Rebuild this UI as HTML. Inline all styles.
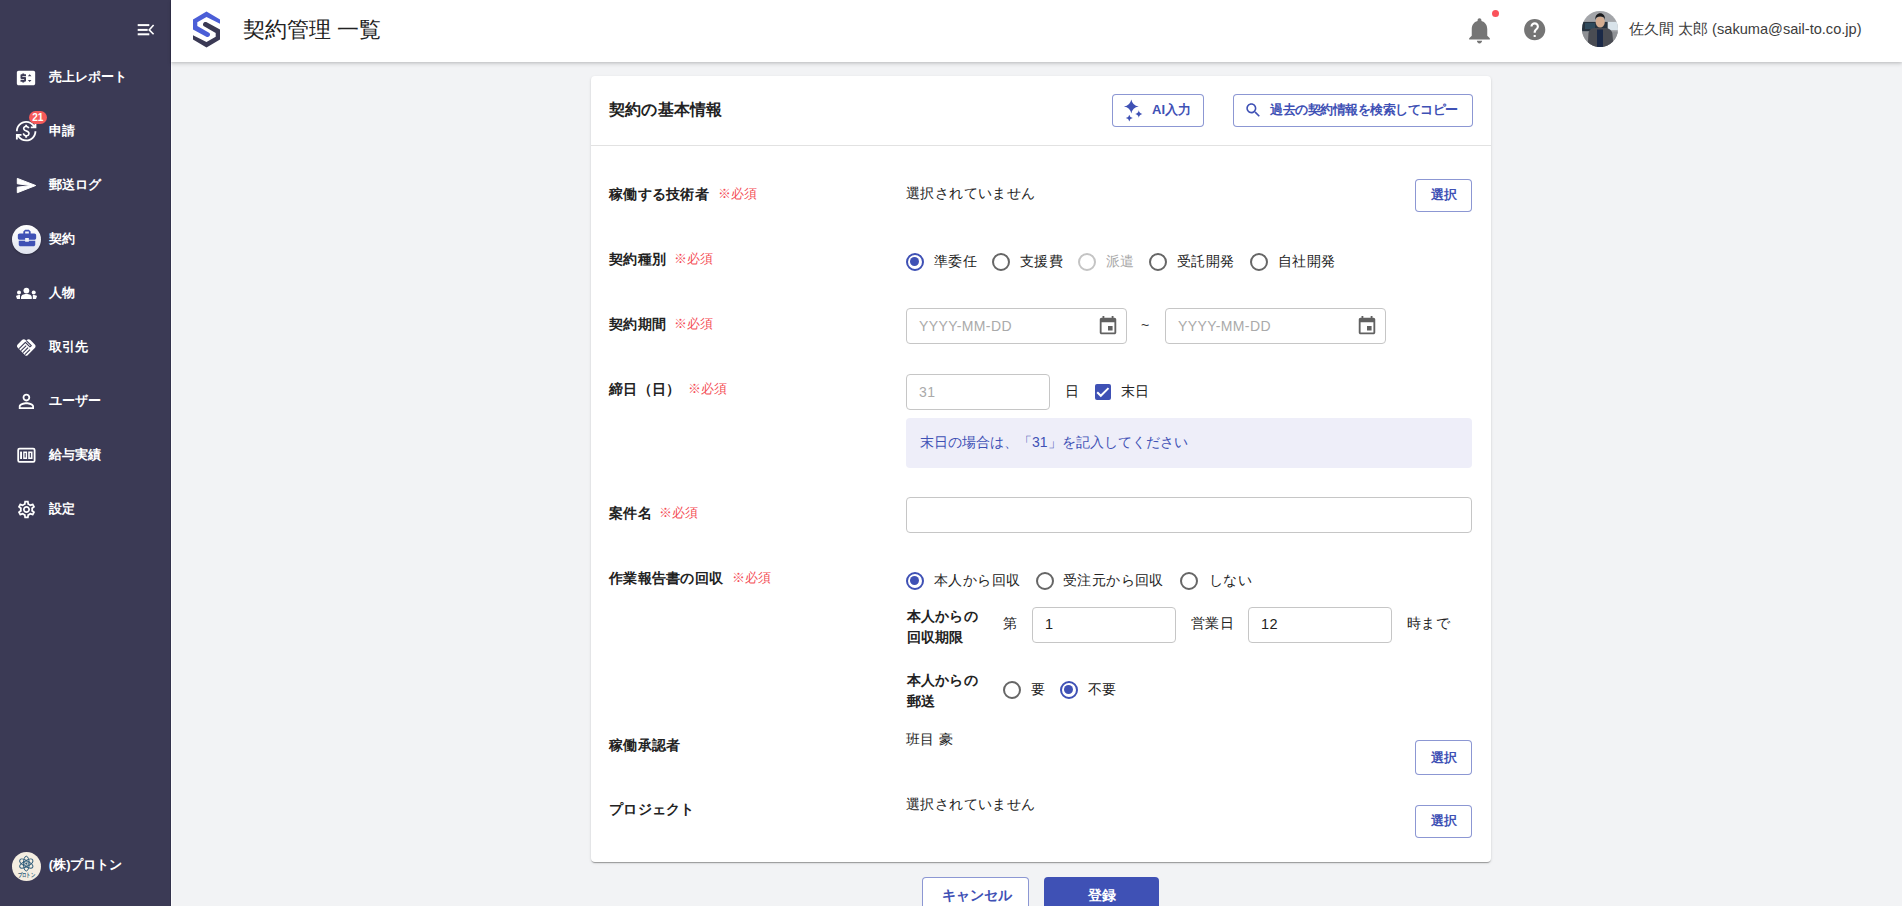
<!DOCTYPE html>
<html lang="ja">
<head>
<meta charset="utf-8">
<style>
*{box-sizing:border-box;margin:0;padding:0}
html,body{width:1902px;height:906px;overflow:hidden}
body{background:#f2f3f5;font-family:"Liberation Sans",sans-serif;color:#222;position:relative}
.a{position:absolute}
.t{position:absolute;white-space:nowrap;line-height:1}
#side{position:absolute;left:0;top:0;width:171px;height:906px;background:#3b3a55;border-right:1px solid #33324c}
#sline{position:absolute;left:171px;top:62px;width:1px;height:844px;background:#fbfbfc}
#head{position:absolute;left:171px;top:0;width:1731px;height:62px;background:#fff;box-shadow:0 2px 4px rgba(0,0,0,0.14),0 1px 2px rgba(0,0,0,0.08)}
.nav{position:absolute;left:48.8px;color:#fff;font-weight:bold;font-size:13px;line-height:1;white-space:nowrap}
.card{position:absolute;left:591px;top:76px;width:900px;height:786px;background:#fff;border-radius:4px;box-shadow:0px 2px 1px -1px rgba(0,0,0,0.2),0px 1px 1px 0px rgba(0,0,0,0.14),0px 1px 3px 0px rgba(0,0,0,0.12)}
.lbl{position:absolute;left:609px;font-weight:bold;font-size:14px;line-height:14px;white-space:nowrap;color:#222;letter-spacing:0.3px}
.req{position:absolute;font-size:12.5px;line-height:12px;margin-left:-1px;margin-top:-0.3px;color:#f44f57;white-space:nowrap}
.txt{position:absolute;font-size:14px;line-height:14px;white-space:nowrap;color:#222;letter-spacing:0.4px}
.btn{position:absolute;border:1px solid rgba(63,81,181,0.6);border-radius:4px;background:#fff;color:#3f51b5;font-weight:bold;font-size:13px;white-space:nowrap}
.inp{position:absolute;border:1px solid #c6c6c6;border-radius:4px;background:#fff}
.ph{position:absolute;font-size:14px;line-height:14px;color:#aaaaaa;white-space:nowrap;letter-spacing:0.4px}
.rad{position:absolute;width:18px;height:18px;border-radius:50%;border:2px solid #666}
.rad.on{border-color:#3f51b5}
.rad.on::after{content:"";position:absolute;left:2.5px;top:2.5px;width:9px;height:9px;border-radius:50%;background:#3f51b5}
.rad.dis{border-color:#c4c4c4}
</style>
</head>
<body>
<div id="side">
  <!-- collapse icon -->
  <svg class="a" style="left:136px;top:22px" width="20" height="16" viewBox="0 0 20 16">
    <rect x="1.7" y="2.1" width="11.6" height="2" fill="#fff"/>
    <rect x="1.7" y="6.9" width="10" height="2" fill="#fff"/>
    <rect x="1.7" y="11.3" width="11.6" height="2" fill="#fff"/>
    <path d="M17.6 3 L13.2 7.9 L17.6 12.3" stroke="#fff" stroke-width="1.6" fill="none"/>
  </svg>
  <!-- nav 1 price_change -->
  <svg class="a" style="left:15.4px;top:67px" width="22" height="22" viewBox="0 0 24 24"><path fill="#fff" d="M20 4H4c-1.11 0-1.99.89-1.99 2L2 18c0 1.11.89 2 2 2h16c1.11 0 2-.89 2-2V6c0-1.11-.89-2-2-2zm-8 6H8v1h3c.55 0 1 .45 1 1v3c0 .55-.45 1-1 1h-1v1H8v-1H6v-2h4v-1H7c-.55 0-1-.45-1-1V9c0-.55.45-1 1-1h1V7h2v1h2v2zm4 6.25l-2-2h4l-2 2zM14 10l2-2 2 2h-4z"/></svg>
  <div class="nav" style="top:70px">売上レポート</div>
  <!-- nav 2 currency_exchange -->
  <svg class="a" style="left:15.1px;top:120.3px" width="22.3" height="22.3" viewBox="0 0 24 24"><path fill="#fff" d="M12.89 11.1c-1.78-.59-2.64-.96-2.64-1.9 0-1.02 1.11-1.39 1.81-1.39 1.31 0 1.79.99 1.9 1.34l1.58-.67c-.15-.44-.82-1.91-2.54-2.210V5h-2v1.3c-2.48.56-2.49 2.86-2.49 2.96 0 2.27 2.250 2.91 3.35 3.31 1.58.56 2.28 1.07 2.28 2.03 0 1.13-1.05 1.61-1.98 1.61-1.82 0-2.340-1.87-2.4-2.09l-1.66.67c.63 2.19 2.28 2.78 2.9 2.96V19h2v-1.24c.4-.09 2.9-.59 2.9-3.22 0-1.39-.61-2.61-3.01-3.44zM3 21H1v-6h6v2H4.52c1.61 2.41 4.36 4 7.48 4 4.97 0 9-4.03 9-9h2c0 6.08-4.92 11-11 11-3.72 0-7.01-1.85-9-4.67V21zm-2-9C1 5.92 5.92 1 12 1c3.72 0 7.01 1.85 9 4.67V3h2v6h-6V7h2.48C17.87 4.59 15.120 3 12 3c-4.97 0-9 4.03-9 9H1z"/></svg>
  <div class="a" style="left:29px;top:110.5px;width:18px;height:13px;border-radius:7px;background:#f65a5a;color:#fff;font-size:10px;font-weight:bold;line-height:13px;text-align:center;text-indent:-0.5px">21</div>
  <div class="nav" style="top:124px">申請</div>
  <!-- nav 3 send -->
  <svg class="a" style="left:0;top:0" width="60" height="200" viewBox="0 0 60 200"><path fill="#fff" stroke="#fff" stroke-width="1" stroke-linejoin="round" d="M17.3 178.4 L35.7 185.5 L17.3 192.7 L17.3 187.2 L31.2 185.5 L17.3 183.8 Z"/></svg>
  <div class="nav" style="top:178px">郵送ログ</div>
  <!-- nav 4 active -->
  <div class="a" style="left:12px;top:225px;width:29px;height:29px;border-radius:50%;background:linear-gradient(#ffffff,#dfe3ee);box-shadow:0 1px 2px rgba(0,0,0,0.3)"></div>
  <svg class="a" style="left:15.5px;top:227px" width="22" height="22" viewBox="0 0 24 24"><path fill="#3f51b5" d="M10 16v-1H3.01L3 19c0 1.11.89 2 2 2h14c1.11 0 2-.89 2-2v-4h-7v1h-4zm10-9h-4.01V5l-2-2h-4l-2 2v2H4c-1.1 0-2 .9-2 2v3c0 1.11.89 2 2 2h6v-2h4v2h6c1.1 0 2-.9 2-2V9c0-1.1-.9-2-2-2zm-6 0h-4V5h4v2z"/></svg>
  <div class="nav" style="top:232px">契約</div>
  <!-- nav 5 groups -->
  <svg class="a" style="left:0;top:0" width="60" height="320" viewBox="0 0 60 320">
    <circle cx="26.4" cy="290.6" r="2.9" fill="#fff"/>
    <path fill="#fff" d="M21 299 L21 297.5 C21 295 23.5 293.9 26.4 293.9 C29.3 293.9 31.8 295 31.8 297.5 L31.8 299 Z"/>
    <circle cx="19" cy="292.6" r="2" fill="#fff"/>
    <circle cx="33.7" cy="292.6" r="2" fill="#fff"/>
    <path fill="#fff" d="M16 296 C17 295.2 18.5 295 20 295 L20 299 L17 299 Z"/>
    <path fill="#fff" d="M32.8 295 C34.5 295 36 295.2 37 296 L36 299 L32.8 299 Z"/>
  </svg>
  <div class="nav" style="top:286px">人物</div>
  <!-- nav 6 handshake -->
  <svg class="a" style="left:0;top:0" width="60" height="380" viewBox="0 0 60 380">
    <path fill="#fff" d="M17.6 344.5 L22 340.1 C23 339.1 24.6 339.1 25.6 340.1 L26.2 340.7 L26.8 340.1 C27.8 339.1 29.4 339.1 30.4 340.1 L34.8 344.5 C35.8 345.5 35.8 347 34.8 348 L27.4 355.4 C26.8 356 26 356 25.4 355.4 L17.6 347.6 C16.8 346.8 16.8 345.3 17.6 344.5 Z"/>
    <path d="M26.3 340.6 L31.3 345.6 L30.1 346.8" stroke="#3b3a55" stroke-width="1.1" fill="none" stroke-linejoin="round"/>
    <path d="M19.1 348.6 L25.4 342.3 L30.2 347.1" stroke="#3b3a55" stroke-width="1.1" fill="none" stroke-linejoin="round"/>
    <path d="M21.1 350.7 L26.2 345.6 M23.1 352.7 L28.1 347.7 M25 354.6 L30 349.6" stroke="#3b3a55" stroke-width="1.1" fill="none"/>
  </svg>
  <div class="nav" style="top:340px">取引先</div>
  <!-- nav 7 person_outline -->
  <svg class="a" style="left:15.1px;top:390.1px" width="22.8" height="22.8" viewBox="0 0 24 24"><path fill="#fff" d="M12 5.9c1.16 0 2.1.94 2.1 2.1s-.94 2.1-2.1 2.1S9.9 9.16 9.9 8s.94-2.1 2.1-2.1m0 9c2.970 0 6.1 1.46 6.1 2.1v1.1H5.9V17c0-.64 3.13-2.1 6.1-2.1M12 4C9.79 4 8 5.79 8 8s1.79 4 4 4 4-1.79 4-4-1.79-4-4-4zm0 9c-2.67 0-8 1.34-8 4v3h16v-3c0-2.66-5.33-4-8-4z"/></svg>
  <div class="nav" style="top:394px">ユーザー</div>
  <!-- nav 8 money -->
  <svg class="a" style="left:0;top:400px" width="60" height="80" viewBox="0 400 60 80">
    <rect x="18.2" y="448.7" width="16.4" height="13.2" rx="1.4" fill="none" stroke="#fff" stroke-width="1.8"/>
    <rect x="20.1" y="451.6" width="1.9" height="7.4" fill="#fff"/>
    <path fill="#fff" fill-rule="evenodd" d="M23.2 451.6 h3.9 v7.4 h-3.9 Z M24.6 453 v4.6 h1.1 v-4.6 Z"/>
    <path fill="#fff" fill-rule="evenodd" d="M28.2 451.6 h4.3 v7.4 h-4.3 Z M29.8 453 v4.6 h1.1 v-4.6 Z"/>
  </svg>
  <div class="nav" style="top:448px">給与実績</div>
  <!-- nav 9 settings -->
  <svg class="a" style="left:15.5px;top:498.5px" width="21" height="21" viewBox="0 0 24 24"><path fill="#fff" d="M19.43 12.98c.04-.32.07-.64.07-.98 0-.34-.03-.66-.07-.98l2.11-1.65c.19-.15.24-.42.12-.64l-2-3.46c-.09-.16-.26-.25-.44-.25-.06 0-.12.01-.17.03l-2.49 1c-.52-.4-1.08-.73-1.69-.98l-.38-2.65C14.46 2.18 14.25 2 14 2h-4c-.25 0-.46.18-.49.42l-.38 2.65c-.61.25-1.17.59-1.69.98l-2.49-1c-.06-.02-.12-.03-.18-.03-.17 0-.34.09-.43.25l-2 3.46c-.13.22-.07.49.12.64l2.11 1.65c-.04.32-.07.65-.07.98 0 .33.03.66.07.98l-2.11 1.65c-.19.15-.24.42-.12.64l2 3.46c.09.16.26.25.44.25.06 0 .12-.01.17-.03l2.49-1c.52.4 1.08.73 1.69.98l.38 2.65c.03.24.24.42.49.42h4c.25 0 .46-.18.49-.42l.38-2.65c.61-.25 1.17-.59 1.69-.98l2.49 1c.06.02.12.03.18.03.17 0 .34-.09.43-.25l2-3.46c.12-.22.07-.49-.12-.64l-2.11-1.650zm-1.98-1.71c.04.31.05.52.05.73 0 .21-.02.43-.05.73l-.14 1.13.89.7 1.08.84-.7 1.21-1.27-.51-1.04-.42-.9.68c-.43.32-.84.56-1.25.73l-1.06.43-.16 1.13-.2 1.35h-1.4l-.19-1.35-.16-1.13-1.06-.43c-.43-.18-.83-.41-1.23-.71l-.91-.7-1.06.43-1.27.51-.7-1.21 1.08-.84.89-.7-.14-1.13c-.03-.31-.05-.54-.05-.74s.02-.43.05-.73l.14-1.13-.89-.7-1.08-.84.7-1.21 1.27.51 1.04.42.9-.68c.43-.32.84-.56 1.25-.73l1.06-.43.16-1.13.2-1.35h1.39l.19 1.35.16 1.13 1.06.43c.43.18.83.41 1.23.71l.91.7 1.06-.43 1.27-.51.7 1.21-1.07.85-.89.7.14 1.130zM12 8c-2.21 0-4 1.79-4 4s1.79 4 4 4 4-1.79 4-4-1.79-4-4-4zm0 6c-1.1 0-2-.9-2-2s.9-2 2-2 2 .9 2 2-.9 2-2 2z"/></svg>
  <div class="nav" style="top:502px">設定</div>
  <!-- company -->
  <div class="a" style="left:12px;top:852px;width:29px;height:29px;border-radius:50%;background:#f4ede1"></div>
  <svg class="a" style="left:12px;top:852px" width="30" height="30" viewBox="0 0 30 30">
    <g fill="none" stroke="#2d5b7a" stroke-width="1">
      <ellipse cx="14.3" cy="11.6" rx="7.4" ry="2.9" transform="rotate(90 14.3 11.6)"/>
      <ellipse cx="14.3" cy="11.6" rx="7.4" ry="2.9" transform="rotate(30 14.3 11.6)"/>
      <ellipse cx="14.3" cy="11.6" rx="7.4" ry="2.9" transform="rotate(-30 14.3 11.6)"/>
      <circle cx="14.3" cy="11.6" r="2.2" stroke-width="0.7"/>
    </g>
    <circle cx="14.3" cy="11.6" r="1.1" fill="#2d5b7a"/>
    <text x="14.5" y="24.5" font-size="6" font-weight="900" fill="#2d5b7a" text-anchor="middle" textLength="17.4" lengthAdjust="spacingAndGlyphs">プロトン</text>
  </svg>
  <div class="nav" style="top:858px">(株)プロトン</div>
</div>
<div id="sline"></div>
<div id="head"></div>
<!-- logo -->
<svg class="a" style="left:0;top:0" width="240" height="60" viewBox="0 0 240 60">
  <path fill="#4b5ed7" d="M220 19.5 L206.5 11.5 L193 19.5 L193 29.6 L206.3 36.8 C207.6 37.4 209 37 209.8 35.6 C210.4 34.4 209.9 33.3 208.6 32.6 L197.3 26.1 L197.3 22.3 L206.5 16.9 L220 23.8 Z"/>
  <path fill="#3a3954" d="M193 39.5 L206.5 47.5 L220 39.5 L220 29.4 L206.7 22.2 C205.4 21.6 204 22 203.2 23.4 C202.6 24.6 203.1 25.7 204.4 26.4 L215.7 32.9 L215.7 36.7 L206.5 42.1 L193 35.2 Z"/>
</svg>
<div class="t" style="left:243px;top:19.5px;font-size:21.5px;color:#222">契約管理 一覧</div>
<!-- bell -->
<svg class="a" style="left:1464.3px;top:14.5px" width="31" height="31" viewBox="0 0 24 24"><path fill="#757575" d="M12 22c1.1 0 2-.9 2-2h-4c0 1.1.89 2 2 2zm6-6v-5c0-3.07-1.64-5.64-4.5-6.32V4c0-.83-.67-1.5-1.5-1.5s-1.5.67-1.5 1.5v.68C7.63 5.36 6 7.92 6 11v5l-2 2v1h16v-1l-2-2z"/></svg>
<div class="a" style="left:1491.6px;top:10.4px;width:7px;height:7px;border-radius:50%;background:#fa525b"></div>
<!-- help -->
<svg class="a" style="left:1522.2px;top:16.9px" width="25.4" height="25.4" viewBox="0 0 24 24"><path fill="#757575" d="M12 2C6.48 2 2 6.48 2 12s4.48 10 10 10 10-4.48 10-10S17.52 2 12 2zm1 17h-2v-2h2v2zm2.07-7.75l-.9.92C13.45 12.9 13 13.5 13 15h-2v-.5c0-1.1.45-2.1 1.17-2.83l1.24-1.26c.37-.36.59-.86.59-1.410 0-1.1-.9-2-2-2s-2 .9-2 2H8c0-2.21 1.79-4 4-4s4 1.79 4 4c0 .88-.36 1.68-.93 2.25z"/></svg>
<!-- avatar -->
<svg class="a" style="left:1582px;top:10.8px" width="36" height="36" viewBox="0 0 36 36">
  <defs><clipPath id="av"><circle cx="18" cy="18" r="18"/></clipPath></defs>
  <g clip-path="url(#av)">
    <rect x="0" y="0" width="36" height="36" fill="#a3a5a9"/>
    <rect x="0" y="10.9" width="25.5" height="9.6" fill="#26323e"/>
    <rect x="3" y="12" width="10" height="6" fill="#2f4a5c"/>
    <rect x="26" y="10.9" width="10" height="8.2" fill="#d9e3ea"/>
    <rect x="0" y="20.5" width="36" height="16" fill="#8f9195"/>
    <path d="M5.7 36 L6.5 22 C7 19 9 17.6 12 17 L24 17 C27 17.6 29.5 19 30.3 22 L31.6 36 Z" fill="#4a4c53"/>
    <rect x="15" y="18.5" width="6" height="18" fill="#1b2947"/>
    <ellipse cx="18.2" cy="11" rx="4.6" ry="5.6" fill="#d4ac90"/>
    <path d="M13.3 9 C13 4.5 15.5 2.3 18.2 2.3 C21 2.3 23.2 4.5 23 9 C22.5 6.5 21 5.6 18.2 5.6 C15.5 5.6 14 6.5 13.3 9 Z" fill="#1a1a1c"/>
  </g>
</svg>
<div class="t" style="left:1629px;top:22px;font-size:14.6px;color:#3c3c3c">佐久間 太郎 (sakuma@sail-to.co.jp)</div>
<div class="card"></div>
<!-- card header -->
<div class="t" style="left:609px;top:102px;font-size:16px;font-weight:bold;color:#222;letter-spacing:0.2px">契約の基本情報</div>
<div class="btn" style="left:1112px;top:94px;width:92px;height:33px"></div>
<svg class="a" style="left:1120px;top:97px" width="25" height="25" viewBox="0 0 25 25"><path fill="#3f51b5" d="M11.30 2.50 Q12.41 8.45 18.70 9.50 Q12.41 10.55 11.30 16.50 Q10.19 10.55 3.90 9.50 Q10.19 8.45 11.30 2.50 Z M18.80 13.30 Q19.34 16.45 22.40 17.00 Q19.34 17.55 18.80 20.70 Q18.26 17.55 15.20 17.00 Q18.26 16.45 18.80 13.30 Z M9.30 17.70 Q9.83 20.59 12.80 21.10 Q9.83 21.61 9.30 24.50 Q8.78 21.61 5.80 21.10 Q8.78 20.59 9.30 17.70 Z"/></svg>
<div class="t" style="left:1152px;top:103px;font-size:13px;font-weight:bold;color:#3f51b5">AI入力</div>
<div class="btn" style="left:1233px;top:94px;width:240px;height:33px"></div>
<svg class="a" style="left:1243.6px;top:101.2px" width="18.6" height="18.6" viewBox="0 0 24 24"><path fill="#3f51b5" d="M15.5 14h-.79l-.28-.27C15.41 12.59 16 11.11 16 9.5 16 5.91 13.09 3 9.5 3S3 5.91 3 9.5 5.91 16 9.5 16c1.61 0 3.09-.59 4.23-1.570l.27.28v.79l5 4.99L20.49 19l-4.99-5zm-6 0C7.01 14 5 11.99 5 9.5S7.01 5 9.5 5 14 7.01 14 9.5 11.99 14 9.5 14z"/></svg>
<div class="t" style="left:1270px;top:103px;font-size:13px;font-weight:bold;color:#3f51b5;letter-spacing:-0.5px">過去の契約情報を検索してコピー</div>
<div class="a" style="left:591px;top:145px;width:900px;height:1px;background:#e2e2e2"></div>

<!-- row 1 -->
<div class="lbl" style="top:187px">稼働する技術者</div>
<div class="req" style="left:719px;top:188px">※必須</div>
<div class="txt" style="left:906px;top:186px">選択されていません</div>
<div class="btn" style="left:1415px;top:179px;width:57px;height:33px"></div>
<div class="t" style="left:1431px;top:188px;font-size:13px;font-weight:bold;color:#3f51b5">選択</div>

<!-- row 2 -->
<div class="lbl" style="top:252px">契約種別</div>
<div class="req" style="left:675px;top:253px">※必須</div>
<div class="rad on" style="left:905.7px;top:252.8px"></div>
<div class="txt" style="left:934px;top:254px">準委任</div>
<div class="rad" style="left:991.7px;top:252.8px"></div>
<div class="txt" style="left:1020px;top:254px">支援費</div>
<div class="rad dis" style="left:1077.7px;top:252.8px"></div>
<div class="txt" style="left:1106px;top:254px;color:#a8a8a8">派遣</div>
<div class="rad" style="left:1148.7px;top:252.8px"></div>
<div class="txt" style="left:1177px;top:254px">受託開発</div>
<div class="rad" style="left:1249.7px;top:252.8px"></div>
<div class="txt" style="left:1278px;top:254px">自社開発</div>

<!-- row 3 -->
<div class="lbl" style="top:317px">契約期間</div>
<div class="req" style="left:675px;top:318px">※必須</div>
<div class="inp" style="left:906px;top:308px;width:221px;height:36px"></div>
<div class="ph" style="left:919px;top:319px">YYYY-MM-DD</div>
<svg class="a" style="left:1097px;top:315px" width="22" height="22" viewBox="0 0 24 24"><path fill="#616161" d="M17 12h-5v5h5v-5zM16 1v2H8V1H6v2H5c-1.11 0-1.99.9-1.99 2L3 19c0 1.1.89 2 2 2h14c1.1 0 2-.9 2-2V5c0-1.1-.9-2-2-2h-1V1h-2zm3 18H5V8h14v11z"/></svg>
<div class="t" style="left:1141px;top:318px;font-size:14px;color:#333">~</div>
<div class="inp" style="left:1165px;top:308px;width:221px;height:36px"></div>
<div class="ph" style="left:1178px;top:319px">YYYY-MM-DD</div>
<svg class="a" style="left:1356px;top:315px" width="22" height="22" viewBox="0 0 24 24"><path fill="#616161" d="M17 12h-5v5h5v-5zM16 1v2H8V1H6v2H5c-1.11 0-1.99.9-1.99 2L3 19c0 1.1.89 2 2 2h14c1.1 0 2-.9 2-2V5c0-1.1-.9-2-2-2h-1V1h-2zm3 18H5V8h14v11z"/></svg>

<!-- row 4 -->
<div class="lbl" style="top:382px">締日（日）</div>
<div class="req" style="left:689px;top:383px">※必須</div>
<div class="inp" style="left:906px;top:374px;width:144px;height:36px"></div>
<div class="ph" style="left:919px;top:385px">31</div>
<div class="txt" style="left:1065px;top:384px">日</div>
<div class="a" style="left:1094.6px;top:383.6px;width:16.2px;height:16.2px;border-radius:2px;background:#3f51b5"></div>
<svg class="a" style="left:1094px;top:383.5px" width="17" height="17" viewBox="0 0 17 17"><path d="M3.2 8.2 L6.8 11.8 L14.5 4.1" stroke="#fff" stroke-width="2" fill="none"/></svg>
<div class="txt" style="left:1121px;top:384px">末日</div>
<div class="a" style="left:906px;top:418px;width:566px;height:50px;border-radius:4px;background:#eeeef9"></div>
<div class="txt" style="left:920px;top:435px;color:#3f51b5;letter-spacing:0">末日の場合は、「31」を記入してください</div>

<!-- row 5 -->
<div class="lbl" style="top:506px">案件名</div>
<div class="req" style="left:660px;top:507px">※必須</div>
<div class="inp" style="left:906px;top:497px;width:566px;height:36px"></div>

<!-- row 6 -->
<div class="lbl" style="top:571px">作業報告書の回収</div>
<div class="req" style="left:733px;top:572px">※必須</div>
<div class="rad on" style="left:905.7px;top:571.6px"></div>
<div class="txt" style="left:934px;top:573px">本人から回収</div>
<div class="rad" style="left:1035.7px;top:571.6px"></div>
<div class="txt" style="left:1063px;top:573px">受注元から回収</div>
<div class="rad" style="left:1179.6px;top:571.6px"></div>
<div class="txt" style="left:1209px;top:573px">しない</div>

<div class="t" style="left:906.8px;top:605.5px;font-size:14px;font-weight:bold;line-height:21.5px;color:#222;letter-spacing:0.2px">本人からの<br>回収期限</div>
<div class="txt" style="left:1003px;top:616px">第</div>
<div class="inp" style="left:1032px;top:607px;width:144px;height:36px"></div>
<div class="txt" style="left:1045px;top:617px;font-size:14.5px">1</div>
<div class="txt" style="left:1191px;top:616px">営業日</div>
<div class="inp" style="left:1248px;top:607px;width:144px;height:36px"></div>
<div class="txt" style="left:1261px;top:617px;font-size:14.5px">12</div>
<div class="txt" style="left:1407px;top:616px">時まで</div>

<div class="t" style="left:906.8px;top:669.5px;font-size:14px;font-weight:bold;line-height:21.5px;color:#222;letter-spacing:0.2px">本人からの<br>郵送</div>
<div class="rad" style="left:1002.6px;top:680.8px"></div>
<div class="txt" style="left:1031px;top:682px">要</div>
<div class="rad on" style="left:1059.7px;top:680.8px"></div>
<div class="txt" style="left:1088px;top:682px">不要</div>

<!-- row 7 -->
<div class="lbl" style="top:738px">稼働承認者</div>
<div class="txt" style="left:906px;top:732px">班目 豪</div>
<div class="btn" style="left:1415px;top:740px;width:57px;height:35px"></div>
<div class="t" style="left:1431px;top:751px;font-size:13px;font-weight:bold;color:#3f51b5">選択</div>

<!-- row 8 -->
<div class="lbl" style="top:802px">プロジェクト</div>
<div class="txt" style="left:906px;top:797px">選択されていません</div>
<div class="btn" style="left:1415px;top:805px;width:57px;height:33px"></div>
<div class="t" style="left:1431px;top:814px;font-size:13px;font-weight:bold;color:#3f51b5">選択</div>

<!-- footer -->
<div class="btn" style="left:922px;top:877px;width:107px;height:40px"></div>
<div class="t" style="left:942px;top:888px;font-size:14px;font-weight:bold;color:#3f51b5">キャンセル</div>
<div class="a" style="left:1044px;top:877px;width:115px;height:40px;border-radius:4px;background:#3f51b5"></div>
<div class="t" style="left:1088px;top:888px;font-size:14px;font-weight:bold;color:#fff">登録</div>
</body>
</html>
